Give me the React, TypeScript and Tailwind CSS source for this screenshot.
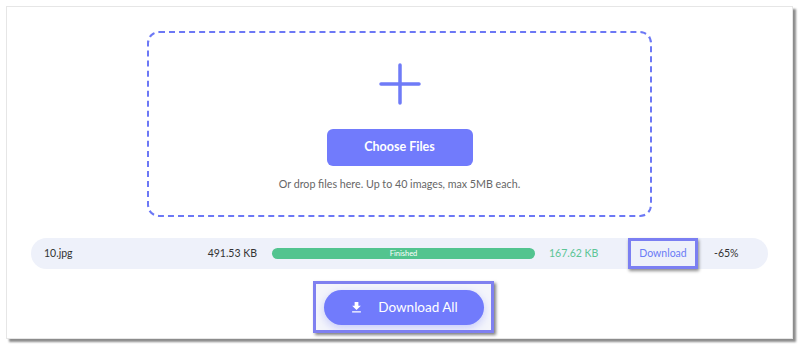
import { MdFileDownload } from "react-icons/md";

const font = { fontFamily: 'Lato, "Noto Sans", sans-serif' };

const FileRow = () => {
    return (
        <div className="mx-[24px] mt-[21px] flex h-[31px] items-center rounded-full bg-[#eef1fa] pl-[13px] text-[10.5px] text-[#333]">
            <span className="w-[150px]">10.jpg</span>
            <span className="w-[63px] text-right">491.53 KB</span>
            <div className="ml-[15px] flex h-[11px] w-[263px] items-center justify-center rounded-full bg-[#52c48f]">
                <span className="text-[7.5px] leading-none text-white">Finished</span>
            </div>
            <span className="ml-[14px] w-[60px] text-[#5cc596]">167.62 KB</span>
            <div className="ml-[19px] flex h-[31px] w-[70px] items-center justify-center border-[3px] border-[#7b7ff2] shadow-[1px_2px_3px_rgba(0,0,0,0.45)]">
                <span className="text-[#6b7cf6]">Download</span>
            </div>
            <span className="ml-[16px]">-65%</span>
        </div>
    );
};

export default function App() {
    return (
        <div className="h-[346px] w-[800px] bg-white pl-[6px] pt-[6px]" style={font}>
            <div className="h-[333px] w-[787px] border border-[#e6e6e6] bg-white pt-[24px] shadow-[3px_3px_2px_rgba(0,0,0,0.45)]">
                <div className="mx-auto flex h-[186px] w-[505px] flex-col items-center rounded-[12px] border-2 border-dashed border-[#6c78f5] pt-[30px]">
                    <svg width="42" height="42" viewBox="0 0 42 42" fill="none" stroke="#6f7bf7" strokeWidth="3.5" strokeLinecap="round">
                        <path d="M21 2v38M2 21h38" />
                    </svg>
                    <button className="mt-[24px] h-[37px] w-[146px] rounded-[6px] bg-[#717bfc] text-[12.5px] font-bold text-white">
                        Choose Files
                    </button>
                    <p className="mt-[10px] text-[10.7px] text-[#666]">Or drop files here. Up to 40 images, max 5MB each.</p>
                </div>
                <FileRow />
                <div className="mt-[12px] flex justify-center pl-[8px]">
                    <div className="flex h-[52px] w-[181px] items-center justify-center border-[3px] border-[#7f80f0] bg-[#f4f5fb] shadow-[2px_2px_3px_rgba(0,0,0,0.5)]">
                        <button className="flex h-[35px] w-[160px] items-center justify-center gap-[14px] rounded-full bg-[#717bfc] text-[13.5px] text-white shadow-[0_3px_8px_rgba(113,123,252,0.35)]">
                            <MdFileDownload className="h-[15px] w-[15px]" />
                            <span>Download All</span>
                        </button>
                    </div>
                </div>
            </div>
        </div>
    );
}
